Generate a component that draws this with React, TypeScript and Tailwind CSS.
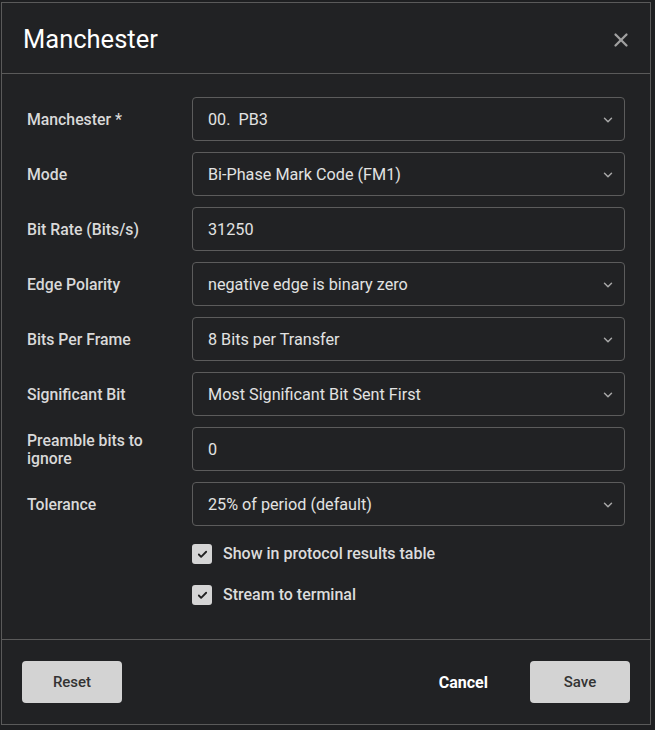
import { Check, ChevronDown, X } from "lucide-react";

type Field = {
  label: string;
  value: string;
  select?: boolean;
};

const fields: Field[] = [
  { label: "Manchester *", value: "00.  PB3", select: true },
  { label: "Mode", value: "Bi-Phase Mark Code (FM1)", select: true },
  { label: "Bit Rate (Bits/s)", value: "31250" },
  { label: "Edge Polarity", value: "negative edge is binary zero", select: true },
  { label: "Bits Per Frame", value: "8 Bits per Transfer", select: true },
  { label: "Significant Bit", value: "Most Significant Bit Sent First", select: true },
  { label: "Preamble bits to ignore", value: "0" },
  { label: "Tolerance", value: "25% of period (default)", select: true },
];

function FormRow({ label, value, select }: Field) {
  return (
    <div className="flex items-center h-[44px]">
      <label className="w-[165px] pr-[20px] pt-[2px] text-[15.8px] leading-[18px] font-medium text-[#d9d9d9]">
        {label}
      </label>
      <div className="flex-1 h-full flex items-center justify-between rounded-[4px] border border-[#5c5c5c] pl-[15px] pr-[9px] pt-[2px]">
        <span className="text-[16.2px] text-[#e2e2e2] whitespace-pre">{value}</span>
        {select && <ChevronDown className="w-[14px] h-[14px] text-[#a8a8a8]" strokeWidth={2.5} />}
      </div>
    </div>
  );
}

function CheckRow({ label }: { label: string }) {
  return (
    <div className="flex items-center h-[30px] pl-[165px]">
      <div className="w-[20px] h-[20px] rounded-[3px] bg-[#d5d5d5] flex items-center justify-center">
        <Check className="w-[11px] h-[11px] text-[#1f1f1f]" strokeWidth={4} />
      </div>
      <span className="ml-[11px] text-[16px] font-medium text-[#dcdcdc]">{label}</span>
    </div>
  );
}

export default function App() {
  return (
    <div className="w-[655px] h-[730px] bg-[#1e1f21] pt-[2px] pl-px" style={{ fontFamily: "Roboto, 'Liberation Sans', sans-serif" }}>
      <div className="w-[650px] h-[723px] bg-[#212224] border border-[#5a5a5a] flex flex-col">
        {/* Header */}
        <div className="h-[71px] shrink-0 border-b border-[#5a5a5a] flex items-center justify-between pt-[3px] pl-[21px] pr-[18px]">
          <h2 className="text-[25.5px] font-normal text-white">Manchester</h2>
          <X className="w-[22px] h-[22px] text-[#a0a0a0]" strokeWidth={2.5} />
        </div>

        {/* Body */}
        <div className="flex-1 pt-[23px] pl-[25px] pr-[25px]">
          <div className="flex flex-col gap-[11px]">
            {fields.map((f) => (
              <FormRow key={f.label} {...f} />
            ))}
          </div>
          <div className="flex flex-col gap-[11px] mt-[13px]">
            <CheckRow label="Show in protocol results table" />
            <CheckRow label="Stream to terminal" />
          </div>
        </div>

        {/* Footer */}
        <div className="h-[85px] shrink-0 border-t border-[#5a5a5a] flex items-center justify-between pl-[20px] pr-[20px] pb-px">
          <button className="w-[100px] h-[42px] rounded-[4px] bg-[#d3d3d3] pt-[2px] text-[15px] font-medium text-[#333]">
            Reset
          </button>
          <div className="flex items-center gap-[42px]">
            <button className="pt-[2px] text-[16px] font-bold text-white">Cancel</button>
            <button className="w-[100px] h-[42px] rounded-[4px] bg-[#d3d3d3] pt-[2px] text-[15px] font-medium text-[#333]">
              Save
            </button>
          </div>
        </div>
      </div>
    </div>
  );
}
